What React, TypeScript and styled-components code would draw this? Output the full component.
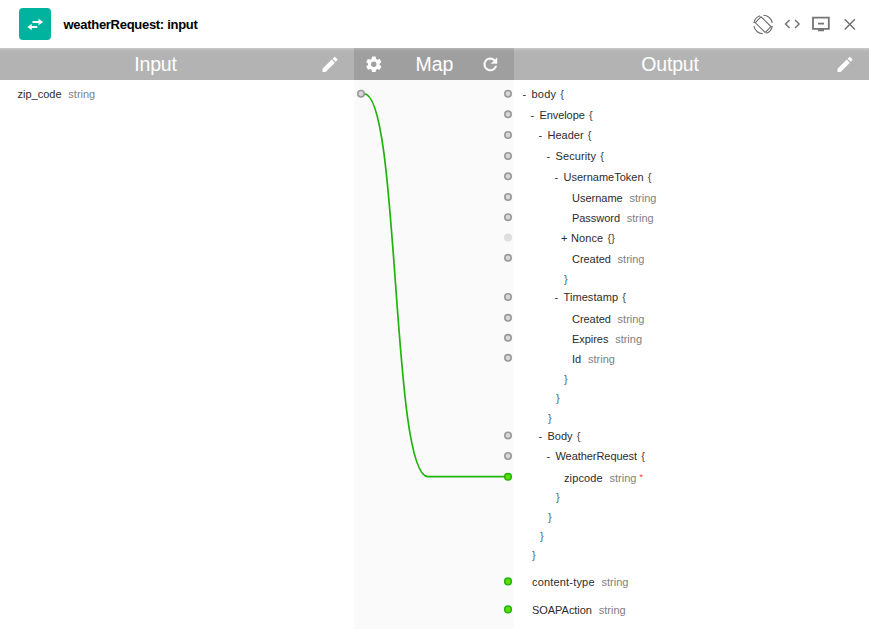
import React from "react";
import styled, { createGlobalStyle } from "styled-components";

const GlobalStyle = createGlobalStyle`
  * { box-sizing: border-box; }
  body { margin: 0; background: #fff; font-family: "Liberation Sans", Arial, sans-serif; }
`;

const Page = styled.div`
  display: flex;
  flex-direction: column;
  width: 869px;
  height: 629px;
  overflow: hidden;
  background: #fff;
`;

const TitleBar = styled.header`
  display: flex;
  align-items: center;
  height: 48px;
  padding: 0 9px 0 19px;
`;

const Logo = styled.div`
  display: flex;
  width: 32px;
  height: 32px;
  border-radius: 4px;
  background: #00b39e;
`;

const Title = styled.h1`
  flex: 1;
  margin: 2px 0 0 12.5px;
  font-size: 13px;
  line-height: 16px;
  font-weight: 700;
  letter-spacing: -0.29px;
  color: #000;
`;

const Tools = styled.div`
  display: flex;
  align-items: center;
  gap: 9px;
`;

const Columns = styled.div`
  display: grid;
  grid-template-columns: 354px 160px 355px;
  flex: 1;
`;

const Column = styled.section<{ $tint?: boolean }>`
  display: flex;
  flex-direction: column;
  background: ${(p) => (p.$tint ? "#fafafa" : "#fff")};
`;

const Heading = styled.div<{ $dark?: boolean }>`
  display: grid;
  grid-template-columns: 40px 1fr 48px;
  align-items: center;
  height: 32px;
  color: #fff;
  background: ${(p) =>
    p.$dark
      ? "linear-gradient(#b4b4b4 0, #a6a6a6 2px, #9f9f9f 4px)"
      : "linear-gradient(#cbcbcb 0, #bbbbbb 2px, #b3b3b3 4px)"};
`;

const HeadingText = styled.h2<{ $shift: number; $spacing: number }>`
  margin: 0 0 1px ${(p) => p.$shift}px;
  font-size: 19.5px;
  line-height: 24px;
  font-weight: 400;
  text-align: center;
  letter-spacing: ${(p) => p.$spacing}px;
`;

const HeadIcon = styled.svg`
  display: block;
  width: 20px;
  height: 20px;
  justify-self: center;
`;

const Tree = styled.div`
  padding: 4px 0 0 6px;
  font-size: 11px;
  color: #2c2c2c;
`;

const TreeRow = styled.div<{ $h: number; $indent: number }>`
  display: flex;
  height: ${(p) => p.$h}px;
  padding-left: ${(p) => p.$indent}px;
  line-height: 20px;
  white-space: pre;
`;

const Toggle = styled.span<{ $wide?: boolean }>`
  width: ${(p) => (p.$wide ? 12.5 : 11.5)}px;
  padding-left: 2.5px;
`;

const Name = styled.span<{ $spacing: number }>`
  letter-spacing: ${(p) => p.$spacing}px;
`;

const Brace = styled.span<{ $closing?: boolean }>`
  margin-left: ${(p) => (p.$closing ? 0 : 4.2)}px;
  color: ${(p) => (p.$closing ? "#4a6484" : "#444")};
`;

const Type = styled.span`
  margin-left: 6.8px;
  color: #808080;
`;

const Required = styled.span`
  margin-left: 3px;
  color: #f33;
  font-size: 9px;
  line-height: 18px;
`;

const Wires = styled.svg`
  display: block;
  width: 160px;
  height: 549px;
`;

type Item = { y: number; x: number; name?: string; toggle?: string; brace?: string; type?: string; required?: boolean; ls?: number };

const items: Item[] = [
  { y: 94, x: 520, toggle: "-", name: "body", brace: "{", ls: 0.2 },
  { y: 115, x: 528, toggle: "-", name: "Envelope", brace: "{", ls: -0.08 },
  { y: 135, x: 536, toggle: "-", name: "Header", brace: "{" },
  { y: 156, x: 544, toggle: "-", name: "Security", brace: "{", ls: 0.1 },
  { y: 177, x: 552, toggle: "-", name: "UsernameToken", brace: "{" },
  { y: 198, x: 572, name: "Username", type: "string" },
  { y: 218, x: 572, name: "Password", type: "string", ls: -0.04 },
  { y: 238, x: 558.5, toggle: "+", name: "Nonce", brace: "{}", ls: 0.1 },
  { y: 259, x: 572, name: "Created", type: "string", ls: -0.05 },
  { y: 279, x: 564, brace: "}" },
  { y: 297, x: 552, toggle: "-", name: "Timestamp", brace: "{", ls: 0.07 },
  { y: 319, x: 572, name: "Created", type: "string", ls: -0.05 },
  { y: 339, x: 572, name: "Expires", type: "string", ls: -0.05 },
  { y: 359, x: 572, name: "Id", type: "string" },
  { y: 379, x: 564, brace: "}" },
  { y: 398, x: 556, brace: "}" },
  { y: 418, x: 548, brace: "}" },
  { y: 436, x: 536, toggle: "-", name: "Body", brace: "{" },
  { y: 456, x: 544, toggle: "-", name: "WeatherRequest", brace: "{", ls: -0.06 },
  { y: 478, x: 564, name: "zipcode", type: "string", required: true, ls: 0.12 },
  { y: 497, x: 556, brace: "}" },
  { y: 517, x: 548, brace: "}" },
  { y: 536, x: 540, brace: "}" },
  { y: 555, x: 532, brace: "}" },
  { y: 582, x: 532, name: "content-type", type: "string", ls: 0.18 },
  { y: 610, x: 532, name: "SOAPAction", type: "string", ls: -0.04 },
];

const openPorts = [13.7, 34.3, 55, 76, 96.3, 117, 137.2, 177.8, 217, 237.8, 257.8, 277.8, 355.4, 376];
const mappedPorts = [396.7, 501.4, 529.4];

const Pencil = () => (
  <HeadIcon viewBox="0 0 24 24" fill="#fff">
    <path d="M3 17.75V21.5h3.75L17.81 10.44l-3.75-3.75L3 17.75zM20.71 7.54a1 1 0 0 0 0-1.41l-2.34-2.34a1 1 0 0 0-1.41 0l-1.83 1.83 3.75 3.75 1.83-1.83z" />
  </HeadIcon>
);

export default function App() {
  return (
    <Page>
      <GlobalStyle />
      <TitleBar>
        <Logo>
          <svg width="32" height="32" viewBox="0 0 32 32">
            <path d="M13.5 13.1h6v-2.4l4.6 3.3-4.6 3.3v-2.4h-6zM18.3 18.1h-5.6v-2.3l-4.3 3.2 4.3 3.2v-2.3h5.6z" fill="#fff" />
          </svg>
        </Logo>
        <Title>weatherRequest: input</Title>
        <Tools>
          <svg width="21" height="21" viewBox="-0.6 0 21 21" fill="none" stroke="#6e6e6e" strokeWidth="1.1">
            <path d="M2.6 8.6 8.4 2.8 18.4 12.6 12.6 18.4zM1.3 12.2a9.2 9.2 0 0 0 8.9 7.5M10.8 1.3a9.2 9.2 0 0 1 8.9 7.5M1.3 9.2a9.2 9.2 0 0 1 6.2-7.4M19.7 11.8a9.2 9.2 0 0 1-6.2 7.4" />
          </svg>
          <svg width="20" height="20" viewBox="0 0 20 20" fill="none" stroke="#6e6e6e" strokeWidth="1.4">
            <path d="M7.6 5.9 3.5 10l4.1 4.1M13 5.9l4.1 4.1-4.1 4.1" />
          </svg>
          <svg width="20" height="20" viewBox="0 0 20 20">
            <path d="M2 3.6h15.8v11.2H2z" fill="none" stroke="#747474" strokeWidth="1.8" />
            <path d="M7 8.7h6v1.8H7zM7 15.3h6v2H7z" fill="#747474" />
          </svg>
          <svg width="20" height="20" viewBox="0 0 20 20" fill="none" stroke="#6e6e6e" strokeWidth="1.4">
            <path d="m4.7 5.2 10.2 10.2M14.9 5.2 4.7 15.4" />
          </svg>
        </Tools>
      </TitleBar>
      <Columns>
        <Column>
          <Heading>
            <span />
            <HeadingText $shift={-35} $spacing={-0.15}>Input</HeadingText>
            <Pencil />
          </Heading>
          <Tree>
            <TreeRow $h={20} $indent={11.5}>
              <Name $spacing={0}>zip_code</Name>
              <Type>string</Type>
            </TreeRow>
          </Tree>
        </Column>
        <Column $tint>
          <Heading $dark>
            <HeadIcon viewBox="0 0 24 24" fill="#fff">
              <path d="M19.43 12.98c.04-.32.07-.64.07-.98s-.03-.66-.07-.98l2.11-1.65a.5.5 0 0 0 .12-.64l-2-3.46a.5.5 0 0 0-.61-.22l-2.49 1a7.3 7.3 0 0 0-1.69-.98l-.38-2.65A.49.49 0 0 0 14 2h-4a.49.49 0 0 0-.49.42l-.38 2.65c-.61.25-1.17.59-1.69.98l-2.49-1a.5.5 0 0 0-.61.22l-2 3.46a.5.5 0 0 0 .12.64l2.11 1.65a8 8 0 0 0 0 1.96l-2.11 1.65a.5.5 0 0 0-.12.64l2 3.46c.12.22.39.3.61.22l2.49-1c.52.4 1.08.73 1.69.98l.38 2.65c.03.24.24.42.49.42h4c.25 0 .46-.18.49-.42l.38-2.65c.61-.25 1.17-.59 1.69-.98l2.49 1c.23.09.49 0 .61-.22l2-3.46a.5.5 0 0 0-.12-.64zM12 15.5a3.5 3.5 0 1 1 0-7 3.5 3.5 0 0 1 0 7z" transform="translate(.6 1.2) scale(.93)" />
            </HeadIcon>
            <HeadingText $shift={9} $spacing={0}>Map</HeadingText>
            <HeadIcon viewBox="0 0 24 24" fill="#fff" stroke="#fff" strokeWidth="0.5">
              <path d="M17.65 6.35A8 8 0 1 0 19.73 14h-2.08A6 6 0 1 1 12 6c1.66 0 3.14.69 4.22 1.78L13 11h7V4z" transform="translate(.4 .5)" />
            </HeadIcon>
          </Heading>
          <Wires viewBox="0 0 160 549">
            <path d="M7 13.7H10C46 13.7 37 396.7 74 396.7H154" fill="none" stroke="#1fb30b" strokeWidth="1.7" />
            <g fill="#d8d8d8" stroke="#999" strokeWidth="1.6">
              <circle cx="7" cy="13.7" r="3.2" />
              {openPorts.map((y) => (
                <circle key={y} cx="154" cy={y} r="3.2" />
              ))}
            </g>
            <circle cx="154" cy="157.4" r="4" fill="#dedede" />
            <g fill="#5fdd09" stroke="#1fb30b" strokeWidth="1.5">
              {mappedPorts.map((y) => (
                <circle key={y} cx="154" cy={y} r="3.3" />
              ))}
            </g>
          </Wires>
        </Column>
        <Column>
          <Heading>
            <span />
            <HeadingText $shift={-35} $spacing={-0.15}>Output</HeadingText>
            <Pencil />
          </Heading>
          <Tree>
            {items.map((item, i) => (
              <TreeRow key={item.y} $h={(items[i + 1]?.y ?? item.y + 19) - item.y} $indent={item.x - 520}>
                {item.toggle && <Toggle $wide={item.toggle === "+"}>{item.toggle}</Toggle>}
                {item.name && <Name $spacing={item.ls ?? 0}>{item.name}</Name>}
                {item.brace && <Brace $closing={!item.name}>{item.brace}</Brace>}
                {item.type && <Type>{item.type}</Type>}
                {item.required && <Required>*</Required>}
              </TreeRow>
            ))}
          </Tree>
        </Column>
      </Columns>
    </Page>
  );
}
